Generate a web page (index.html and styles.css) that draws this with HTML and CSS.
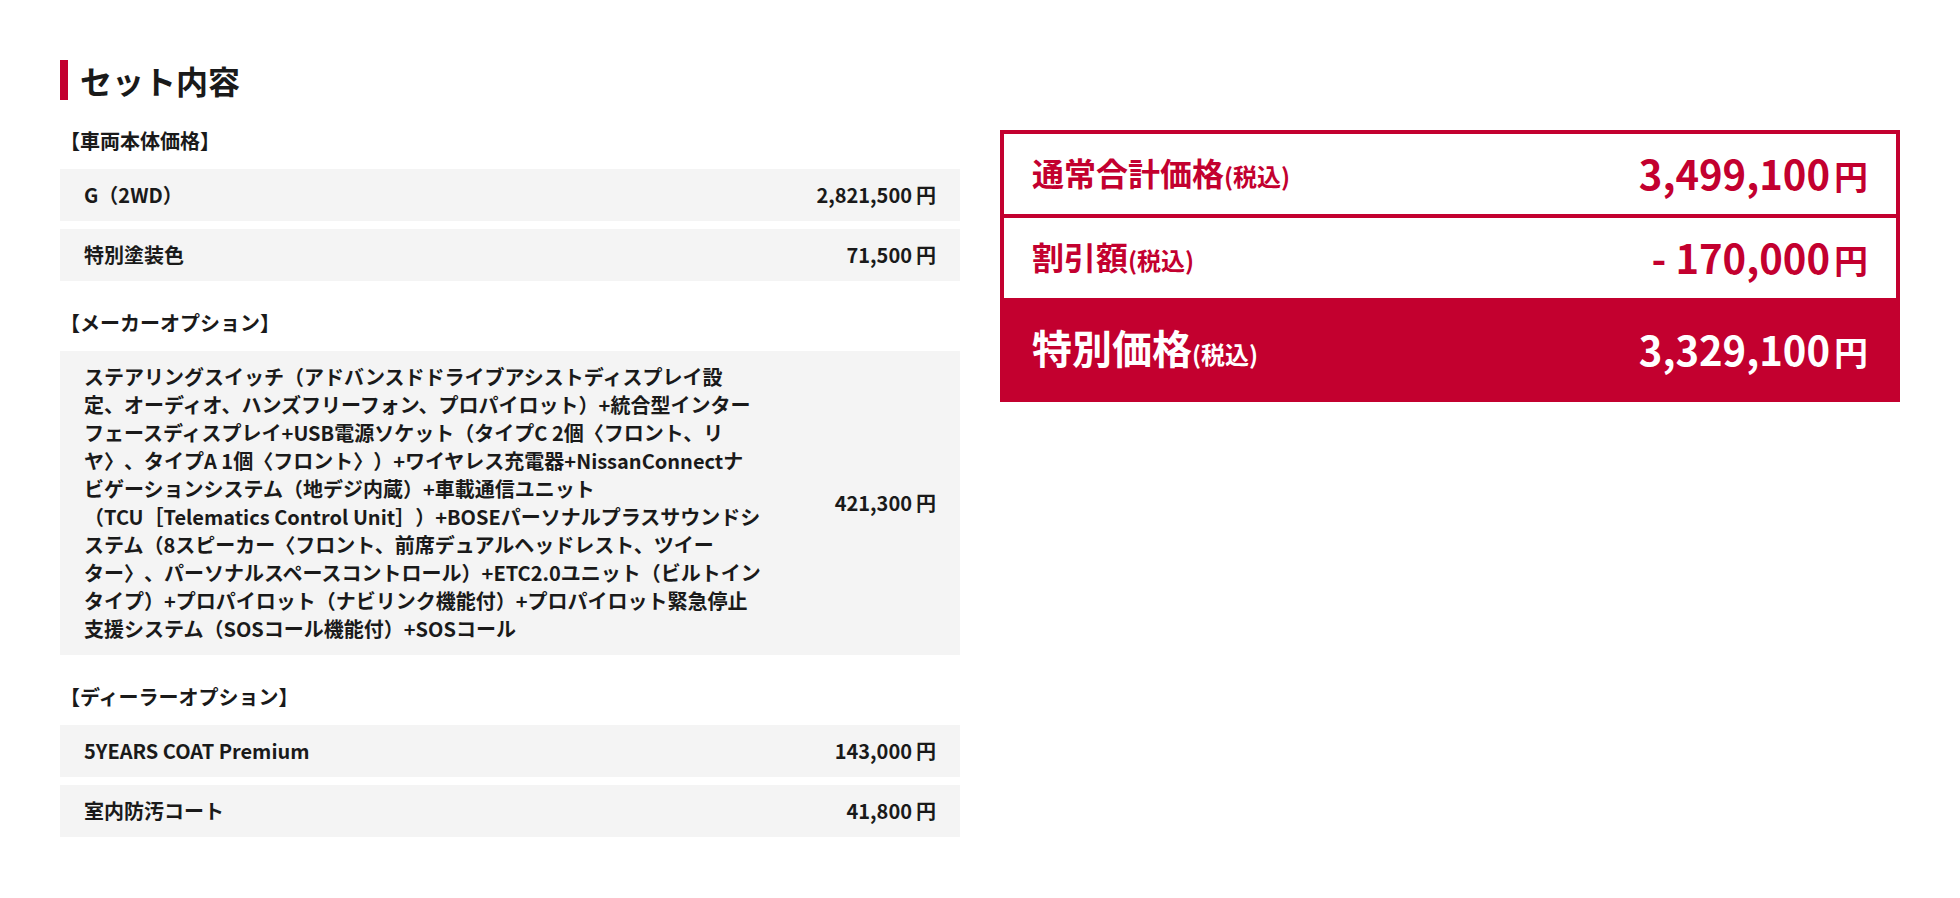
FILE: index.html
```html
<!DOCTYPE html>
<html lang="ja">
<head>
<meta charset="utf-8">
<title>セット内容</title>
<link rel="stylesheet" href="styles.css">
</head>
<body>
<main class="page">
  <h2 class="title">セット内容</h2>
  <div class="cols">
    <section class="items">
      <h3 class="cat">【車両本体価格】</h3>
      <div class="row"><div class="name">G（2WD）</div><div class="price">2,821,500<span class="yen">円</span></div></div>
      <div class="row"><div class="name">特別塗装色</div><div class="price">71,500<span class="yen">円</span></div></div>

      <h3 class="cat">【メーカーオプション】</h3>
      <div class="row"><div class="name long">ステアリングスイッチ（アドバンスドドライブアシストディスプレイ設<br>定、オーディオ、ハンズフリーフォン、プロパイロット）+統合型インター<br>フェースディスプレイ+USB電源ソケット（タイプC 2個〈フロント、リ<br>ヤ〉、タイプA 1個〈フロント〉）+ワイヤレス充電器+NissanConnectナ<br>ビゲーションシステム（地デジ内蔵）+車載通信ユニット<br>（TCU［Telematics Control Unit］）+BOSEパーソナルプラスサウンドシ<br>ステム（8スピーカー〈フロント、前席デュアルヘッドレスト、ツイー<br>ター〉、パーソナルスペースコントロール）+ETC2.0ユニット（ビルトイン<br>タイプ）+プロパイロット（ナビリンク機能付）+プロパイロット緊急停止<br>支援システム（SOSコール機能付）+SOSコール</div><div class="price">421,300<span class="yen">円</span></div></div>

      <h3 class="cat">【ディーラーオプション】</h3>
      <div class="row"><div class="name">5YEARS COAT Premium</div><div class="price">143,000<span class="yen">円</span></div></div>
      <div class="row"><div class="name">室内防汚コート</div><div class="price">41,800<span class="yen">円</span></div></div>
    </section>

    <section class="summary">
      <div class="sum-row normal">
        <div class="sum-label">通常合計価格<small>(税込)</small></div>
        <div class="sum-price">3,499,100<span class="yen">円</span></div>
      </div>
      <div class="sum-row discount">
        <div class="sum-label">割引額<small>(税込)</small></div>
        <div class="sum-price">- 170,000<span class="yen">円</span></div>
      </div>
      <div class="sum-row special">
        <div class="sum-label">特別価格<small>(税込)</small></div>
        <div class="sum-price">3,329,100<span class="yen">円</span></div>
      </div>
    </section>
  </div>
</main>
</body>
</html>
```

FILE: styles.css
```css
* { box-sizing: border-box; }

body {
  margin: 0;
  background: #fff;
  color: #1a1a1a;
  font-family: "Noto Sans CJK JP", "Noto Sans", sans-serif;
  font-weight: 700;
  text-spacing-trim: space-all;
}

.page {
  padding: 60px 60px 40px;
}

.title {
  margin: 0 0 27px;
  border-left: 8px solid #c3002f;
  padding-left: 12px;
  font-size: 32px;
  line-height: 40px;
  font-weight: 700;
}

.cols {
  display: flex;
  gap: 40px;
  align-items: flex-start;
}

.items {
  width: 900px;
}

.cat {
  margin: 28px 0 14px;
  font-size: 20px;
  line-height: 28px;
  font-weight: 700;
}

.cat:first-child {
  margin-top: 0;
}

.row {
  display: flex;
  justify-content: space-between;
  align-items: center;
  background: #f4f4f4;
  padding: 12px 24px;
  margin-bottom: 8px;
  font-size: 20px;
  line-height: 28px;
}

.name.long {
  width: 700px;
}

.price {
  white-space: nowrap;
}

.yen {
  margin-left: 4px;
}

.summary {
  width: 900px;
  margin-top: 3px;
  color: #c3002f;
}

.sum-row {
  display: flex;
  justify-content: space-between;
  align-items: center;
  padding: 0 28px;
}

.normal {
  height: 88px;
  border: 4px solid #c3002f;
}

.discount {
  height: 80px;
  border: 4px solid #c3002f;
  border-top: 0;
  border-bottom: 0;
}

.special {
  height: 104px;
  background: #c3002f;
  color: #fff;
  padding: 0 32px;
}

.sum-label {
  font-size: 32px;
  line-height: 40px;
}

.sum-label small {
  font-size: 24px;
}

.special .sum-label {
  font-size: 40px;
}

.sum-price {
  font-size: 40px;
  line-height: 48px;
}

.sum-price .yen {
  font-size: 34px;
  margin-left: 4px;
}
```
